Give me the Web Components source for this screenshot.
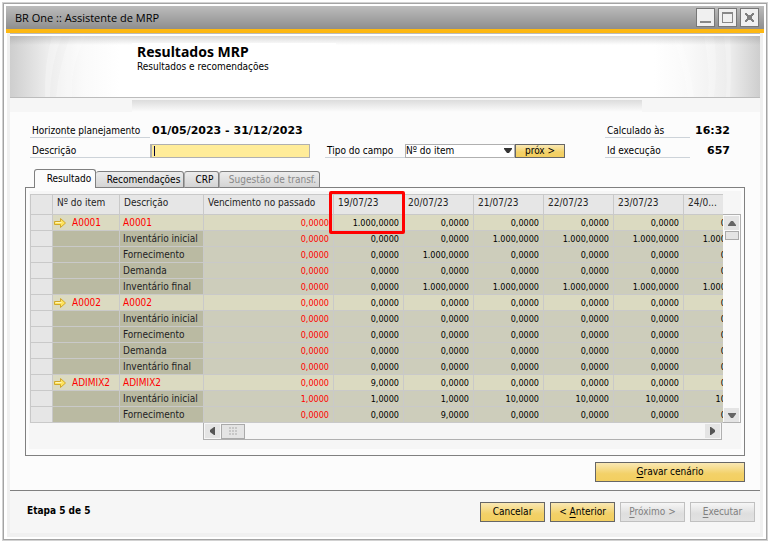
<!DOCTYPE html>
<html lang="pt-BR">
<head>
<meta charset="utf-8">
<title>BR One :: Assistente de MRP</title>
<style>
body{margin:0;background:#fff;font:10px/14px "DejaVu Sans Condensed","DejaVu Sans",sans-serif;color:#000}
</style>
</head>
<body>
<mrp-window caption="BR One :: Assistente de MRP">
  <mrp-banner caption="Resultados MRP">Resultados e recomendações</mrp-banner>
  <mrp-form></mrp-form>
  <mrp-tabs>
    <mrp-grid></mrp-grid>
  </mrp-tabs>
  <mrp-button slot="actions" key="G" text="ravar cenário" wide></mrp-button>
  <span slot="step">Etapa 5 de 5</span>
  <mrp-button slot="footer" text="Cancelar"></mrp-button>
  <mrp-button slot="footer" before="&lt; " key="A" text="nterior"></mrp-button>
  <mrp-button slot="footer" key="P" text="róximo &gt;" disabled></mrp-button>
  <mrp-button slot="footer" key="E" text="xecutar" disabled></mrp-button>
</mrp-window>
<script>
const define = (name, render) => customElements.define(name, class extends HTMLElement {
  connectedCallback() {
    if (this.shadowRoot) return;
    this.attachShadow({mode: 'open'}).innerHTML =
      '<style>*{box-sizing:border-box}button,input,select{font:inherit;color:inherit;margin:0;border-radius:0}</style>' + render(this);
  }
});
const esc = s => (s || '').replace(/</g, '&lt;').replace(/>/g, '&gt;');

define('mrp-window', el => `
<style>
:host{display:flex;flex-direction:column;box-sizing:border-box;min-height:calc(100vh - 2px);margin:2px 3px 0 2px;border:1px solid #d2d2d2;background:#fff}
.frame{flex:1;display:flex;flex-direction:column;border:1px solid #a4a4a4;padding:2px}
header{display:flex;align-items:center;gap:3px;height:23px;padding:0 5px 0 9px;background:linear-gradient(#bcbcbc,#8e8e8e);font:11px/16px "Open Sans","Noto Sans",sans-serif}
h1{flex:1;margin:0;font:inherit}
header button{width:19px;height:19px;padding:0;border:1px solid #777;background:#f0f0f0}
header svg{display:block}
.gold{height:4px;background:#fdb813}
.body{flex:1;display:flex;flex-direction:column;margin:0 1px;padding:0 3px 4px;background:#f0f0f0}
.page{flex:1;display:flex;flex-direction:column;background:#fcfcfc;border-top:1px solid #bbb}
.actions{display:flex;justify-content:flex-end;padding:6px 15px 8px}
footer{flex:1;display:flex;align-items:flex-start;gap:5px;padding:11px 5px 10px 17px;border-top:1px solid #808080;background:#f6f6f6}
.step{flex:1;line-height:18px;font-weight:700}
</style>
<div class="frame">
<header><h1>${esc(el.getAttribute('caption'))}</h1>
<button aria-label="Minimizar"><svg width="17" height="17"><path d="M3 12h11v2H3z" fill="#888"/></svg></button>
<button aria-label="Maximizar"><svg width="17" height="17"><path d="M3 3h11v11H3z M4 5v8h9V5z" fill="#888" fill-rule="evenodd"/></svg></button>
<button aria-label="Fechar"><svg width="17" height="17"><path d="M4 4h2v1h1v1h3V5h1V4h2v2h-1v1h-1v3h1v1h1v2h-2v-1h-1v-1H7v1H6v1H4v-2h1v-1h1V7H5V6H4z" fill="#808080"/></svg></button>
</header>
<div class="gold"></div>
<div class="body"><div class="page"><slot></slot>
<div class="actions"><slot name="actions"></slot></div>
<footer><div class="step"><slot name="step"></slot></div><slot name="footer"></slot></footer>
</div></div></div>`);

define('mrp-banner', el => `
<style>
:host{display:block;padding-top:2px;background:#fff}
.art{display:grid;height:62px;border-bottom:1px solid #bcbcbc;background:#fff}
.art>*{grid-area:1/1}
.left{justify-self:start;width:122px;height:61px}
.right{justify-self:end;width:118px;height:61px}
.shade{height:9px;background:linear-gradient(rgba(130,130,130,.3),rgba(255,255,255,0))}
.copy{margin:7px 0 0 122px;padding-left:5px;width:204px;height:40px;background:#fff;z-index:1}
h2{margin:0;font:700 14px/17px "Noto Sans","Open Sans",sans-serif}
p{margin:0;line-height:14px}
.under{height:14px;padding:2px 118px 0 122px;background:#f6f6f6}
.under div{height:12px;background:linear-gradient(#dcdcdc,#fcfcfc)}
</style>
<div class="art">
<svg class="left" viewBox="0 0 122 61" preserveAspectRatio="none"><defs><linearGradient id="a"><stop stop-color="#cecece"/><stop offset=".3" stop-color="#ececec"/><stop offset=".6" stop-color="#fafafa"/><stop offset=".9" stop-color="#fff"/></linearGradient></defs><path fill="url(#a)" d="M0 0h122v61H0z"/><path fill="#fff" fill-opacity=".25" d="M42 0Q34 28 35 61h5Q40 30 52 0zM60 0Q49 30 46 61h16Q60 30 76 0z"/></svg>
<svg class="right" viewBox="0 0 118 61" preserveAspectRatio="none"><defs><linearGradient id="b"><stop offset=".1" stop-color="#fff"/><stop offset=".4" stop-color="#f9f9f9"/><stop offset=".75" stop-color="#ececec"/><stop offset="1" stop-color="#cecece"/></linearGradient></defs><path fill="url(#b)" d="M0 0h118v61H0z"/><path fill="#fff" fill-opacity=".25" d="M30 0Q42 30 46 61h6Q48 30 38 0zM62 0Q68 30 66 61h6Q76 30 72 0zM82 0Q86 30 84 61h4Q90 30 88 0z"/></svg>
<div class="shade"></div>
<div class="copy"><h2>${esc(el.getAttribute('caption'))}</h2><p><slot></slot></p></div>
</div>
<div class="under"><div></div></div>`);

define('mrp-button', el => {
  const key = el.getAttribute('key');
  return `
<style>
:host{display:block}
button{width:65px;height:20px;padding:0;border:1px solid #666;background:linear-gradient(#f9e8b4,#f3d168 60%,#f3cf60);line-height:16px;white-space:nowrap}
:host([wide]) button{width:150px}
:host([small]) button{width:50px;height:14px;line-height:10px}
button:disabled{color:#808080;border-color:#c0c0c0;background:linear-gradient(#f6f6f6,#dedede 60%,#e2e2e2)}
u{text-underline-offset:2px}
</style>
<button${el.hasAttribute('disabled') ? ' disabled' : ''}>${esc(el.getAttribute('before'))}${key ? `<u>${key}</u>` : ''}${esc(el.getAttribute('text'))}</button>`;
});

define('mrp-form', () => `
<style>
:host{display:flex;justify-content:space-between;padding:12px 30px 11px 20px}
.main{display:grid;grid-template-columns:120px 160px 80px 110px 50px;row-gap:6px}
.info{display:grid;grid-template-columns:85px 40px;row-gap:6px;align-content:start}
label,.name{height:14px;padding-left:2px;border-bottom:1px solid #cdd3d9;white-space:nowrap}
.pair{grid-column:3/6;display:grid;grid-template-columns:80px 110px 50px;margin-left:15px}
b{font:700 11px/14px "DejaVu Sans",sans-serif;white-space:nowrap}
.date{padding-left:2px;grid-column:2/6}
input,select{width:100%;height:14px;border:1px solid #b0b0b0;padding:0 3px;outline:0}
input{border-left-width:2px;background:#ffec99;caret-color:#003}
select{appearance:none;background:#fff;padding:0;line-height:12px}
.field,.drop{display:grid}
.field>*,.drop>*{grid-area:1/1}
.caret{width:1px;height:10px;margin:2px 0 0 4px;background:#003}
.drop svg{justify-self:end;margin:4px 3px 0 0;pointer-events:none}
.info b{text-align:right}
</style>
<div class="main">
<span class="name">Horizonte planejamento</span><b class="date">01/05/2023 - 31/12/2023</b>
<label for="d">Descrição</label><div class="field"><input id="d" type="text"><i class="caret"></i></div>
<div class="pair"><label for="t">Tipo do campo</label><div class="drop"><select id="t"><option>Nº do item</option></select><svg width="8" height="6"><path d="M0 0h8v1L5 5H3L0 1z" fill="#333"/></svg></div><mrp-button small text="próx >"></mrp-button></div>
</div>
<div class="info"><span class="name">Calculado às</span><b>16:32</b><span class="name">Id execução</span><b>657</b></div>`);

define('mrp-tabs', () => `
<style>
:host{display:block;padding:0 15px}
nav{display:flex;align-items:flex-end;padding-left:9px;margin-bottom:-1px}
button{height:17px;padding:0;border:1px solid #808080;border-left-color:#a8a8a8;border-radius:3px 3px 0 0;background:linear-gradient(#ececec,#d4d4d4);line-height:14px;white-space:nowrap}
.on{height:19px;width:62px;padding-left:8px;border-bottom:0;border-left-color:#808080;background:#fcfcfc;position:relative}
.rec{width:88px;border-left:0;padding-left:8px}.crp{width:35px;padding-left:6px}.sug{width:101px;padding-left:6px;color:#888}
.panel{border:1px solid #808080;padding:3px 3px 6px}
.inner{padding:3px 0 9px 1px;background:#f6f6f6}
</style>
<nav role="tablist"><button role="tab" aria-selected="true" class="on">Resultado</button><button role="tab" class="rec">Recomendações</button><button role="tab" class="crp">CRP</button><button role="tab" class="sug" disabled>Sugestão de transf.</button></nav>
<div class="panel"><div class="inner"><slot></slot></div></div>`);

const days = ['19/07/23', '20/07/23', '21/07/23', '22/07/23', '23/07/23', '24/0...'];
const z = '0,0000', k = '1.000,0000', t = '10,0000';
const rows = [
  ['A0001', 'A0001', z, k, z, z, z, z, z],
  ['', 'Inventário inicial', z, z, z, k, k, k, k],
  ['', 'Fornecimento', z, z, k, z, z, z, z],
  ['', 'Demanda', z, z, z, z, z, z, z],
  ['', 'Inventário final', z, z, k, k, k, k, k],
  ['A0002', 'A0002', z, z, z, z, z, z, z],
  ['', 'Inventário inicial', z, z, z, z, z, z, z],
  ['', 'Fornecimento', z, z, z, z, z, z, z],
  ['', 'Demanda', z, z, z, z, z, z, z],
  ['', 'Inventário final', z, z, z, z, z, z, z],
  ['ADIMIX2', 'ADIMIX2', z, '9,0000', z, z, z, z, z],
  ['', 'Inventário inicial', '1,0000', '1,0000', '1,0000', t, t, t, t],
  ['', 'Fornecimento', z, z, '9,0000', z, z, z, z]
];
const arrow = '<svg width="12" height="10" viewBox="0 0 12 10"><path d="M.5 3.5h6v-3L11.5 5l-5 4.500v-3h-6z" fill="#ffe45c" stroke="#d0a82a"/><path d="M1.500 4.500h6" stroke="#fff6b8"/></svg>';

define('mrp-grid', () => `
<style>
:host{display:grid;grid-template-columns:minmax(0,1fr) 18px}
.view{overflow-x:clip}
table{width:723px;table-layout:fixed;border-collapse:separate;border-spacing:0;border-left:1px solid #c8c8c8}
th,td{height:16px;padding:0 3px;border:0 solid #c9c9c9;border-width:0 1px 1px 0;text-align:left;font-weight:400;line-height:14px;white-space:nowrap}
thead th{height:21px;padding:0 0 4px 4px;border-top-width:1px;background:#e6e6e6;color:#222}
td{background:#cdcdbb}
td.n{padding:0 4px 0 0;text-align:right;font-size:9px}
td.past{color:#f00}
td.label{background:#babaa2;color:#222}
.item td{background:#dbdac1}
.item td.label{background:#dbdac1;color:#f00}
tr td.head,tr.item td.head{background:#e6e6e6}
.code{display:flex;align-items:center;gap:6px;margin-left:-2px}
.mark{position:relative}
.mark i{position:absolute;z-index:2;left:-5px;top:-4px;width:76px;height:43px;border:3px solid #f00;border-radius:2px;pointer-events:none}
.v{display:flex;flex-direction:column;margin-top:20px;border:solid #b0b0b0;border-width:1px 1px 1px 0;background:#fafafa;padding:1px 0 0}
.v button,.h button{display:grid;place-items:center;width:15px;height:14px;padding:0;border:0;background:#e4e4e4;margin-left:1px}
.thumb{border:1px solid #aaa;background:#e4e4e4}
.v .thumb{width:14px;height:9px;margin:1px 0 0 2px}
.space{flex:1}
.h{display:flex;align-items:center;height:17px;margin:0 1px 0 173px;border:solid #b0b0b0;border-width:0 1px 1px 1px;background:#f6f6f6;padding-right:1px}
.h .thumb{display:grid;place-items:center;width:24px;height:15px;margin-left:1px}
</style>
<div class="view"><table>
<colgroup><col style="width:22px"><col style="width:67px"><col style="width:84px"><col style="width:130px">${days.map(() => '<col style="width:70px">').join('')}</colgroup>
<thead><tr><th></th><th>Nº do item</th><th>Descrição</th><th>Vencimento no passado</th>${days.map((d, i) => i ? `<th>${d}</th>` : `<th class="mark">${d}<i></i></th>`).join('')}</tr></thead>
<tbody>${rows.map(r => `<tr${r[0] ? ' class="item"' : ''}><td class="head"></td><td class="label">${r[0] ? `<span class="code">${arrow}${r[0]}</span>` : ''}</td><td class="label">${r[1]}</td>${r.slice(2).map((v, i) => `<td class="n${i ? '' : ' past'}">${v}</td>`).join('')}</tr>`).join('')}</tbody>
</table></div>
<div class="v"><button aria-label="Para cima"><svg width="8" height="5"><path d="M3 0h2l3 4v1H0V4z" fill="#666"/></svg></button><div class="thumb"></div><div class="space"></div><button aria-label="Para baixo"><svg width="8" height="5"><path d="M0 0h8v1L5 5H3L0 1z" fill="#666"/></svg></button></div>
<div class="h"><button aria-label="Para a esquerda"><svg width="5" height="8"><path d="M5 0v8H4L0 5V3l4-3z" fill="#555"/></svg></button><div class="thumb"><svg width="8" height="8"><path d="M0 1h2m1 0h2m1 0h2M0 4h2m1 0h2m1 0h2M0 7h2m1 0h2m1 0h2" stroke="#aaa"/></svg></div><div class="space"></div><button aria-label="Para a direita"><svg width="5" height="8"><path d="M0 0v8h1l4-3V3L1 0z" fill="#555"/></svg></button></div>`);
</script>
</body>
</html>
